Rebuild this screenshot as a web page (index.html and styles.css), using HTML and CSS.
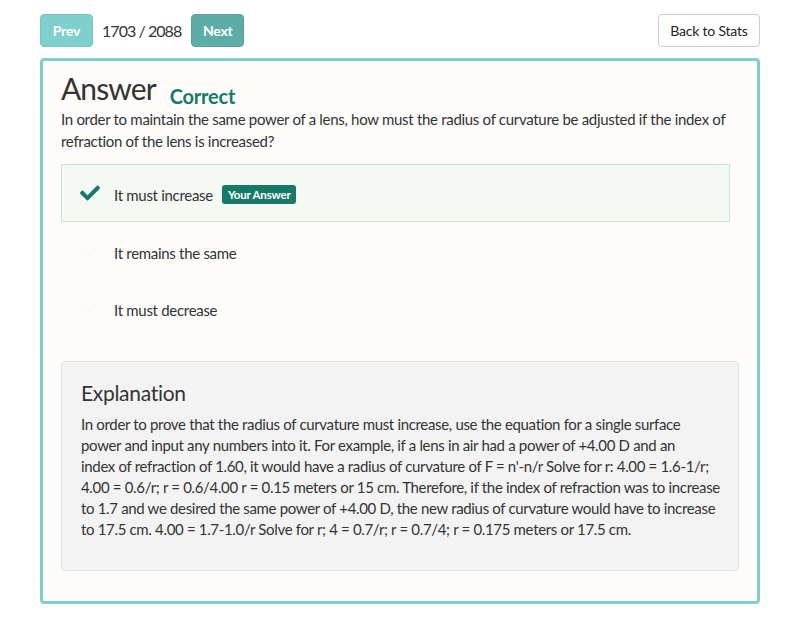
FILE: index.html
```html
<!DOCTYPE html>
<html>
<head>
<meta charset="utf-8">
<link rel="stylesheet" href="styles.css">
</head>
<body>
<div class="page">
  <div class="topbar">
    <div class="nav">
      <button class="btn btn-prev">Prev</button>
      <span class="counter">1703 / 2088</span>
      <button class="btn btn-next">Next</button>
    </div>
    <button class="btn btn-back">Back to Stats</button>
  </div>
  <div class="card">
    <div class="title">
      <h1>Answer</h1>
      <span class="status">Correct</span>
    </div>
    <p class="question">In order to maintain the same power of a lens, how must the radius of curvature be adjusted if the index of refraction of the lens is increased?</p>
    <div class="options">
      <div class="option selected">
        <svg class="check" viewBox="0 0 512 512"><path d="M173.898 439.404l-166.4-166.4c-9.997-9.997-9.997-26.206 0-36.204l36.203-36.204c9.997-9.998 26.207-9.998 36.204 0L192 312.69 432.095 72.596c9.997-9.997 26.207-9.997 36.204 0l36.203 36.204c9.997 9.997 9.997 26.206 0 36.204l-294.4 294.401c-9.998 9.997-26.207 9.997-36.204-.001z"/></svg>
        <span class="opt-text">It must increase</span>
        <span class="badge">Your Answer</span>
      </div>
      <div class="option">
        <svg class="check faint" viewBox="0 0 512 512"><path d="M173.898 439.404l-166.4-166.4c-9.997-9.997-9.997-26.206 0-36.204l36.203-36.204c9.997-9.998 26.207-9.998 36.204 0L192 312.69 432.095 72.596c9.997-9.997 26.207-9.997 36.204 0l36.203 36.204c9.997 9.997 9.997 26.206 0 36.204l-294.4 294.401c-9.998 9.997-26.207 9.997-36.204-.001z"/></svg>
        <span class="opt-text">It remains the same</span>
      </div>
      <div class="option">
        <svg class="check faint" viewBox="0 0 512 512"><path d="M173.898 439.404l-166.4-166.4c-9.997-9.997-9.997-26.206 0-36.204l36.203-36.204c9.997-9.998 26.207-9.998 36.204 0L192 312.69 432.095 72.596c9.997-9.997 26.207-9.997 36.204 0l36.203 36.204c9.997 9.997 9.997 26.206 0 36.204l-294.4 294.401c-9.998 9.997-26.207 9.997-36.204-.001z"/></svg>
        <span class="opt-text">It must decrease</span>
      </div>
    </div>
    <div class="well">
      <h2>Explanation</h2>
      <p>In order to prove that the radius of curvature must increase, use the equation for a single surface<br>power and input any numbers into it. For example, if a lens in air had a power of +4.00 D and an<br>index of refraction of 1.60, it would have a radius of curvature of F = n'-n/r Solve for r: 4.00 = 1.6-1/r;<br>4.00 = 0.6/r; r = 0.6/4.00 r = 0.15 meters or 15 cm. Therefore, if the index of refraction was to increase<br>to 1.7 and we desired the same power of +4.00 D, the new radius of curvature would have to increase<br>to 17.5 cm. 4.00 = 1.7-1.0/r Solve for r; 4 = 0.7/r; r = 0.7/4; r = 0.175 meters or 17.5 cm.</p>
    </div>
  </div>
</div>
</body>
</html>
```
FILE: styles.css
```css
* { box-sizing: border-box; }
html, body { margin: 0; background: #fff; }
body {
  font-family: Lato, "Noto Sans", sans-serif;
  color: #333;
  font-size: 15px;
}
.page { padding: 14px 40px 0 40px; }
.topbar {
  display: flex;
  justify-content: space-between;
  align-items: center;
  height: 33px;
}
.nav { display: flex; align-items: center; }
.btn {
  font-family: inherit;
  height: 33px;
  border-radius: 4px;
  font-size: 14px;
  padding: 0;
  cursor: pointer;
}
.btn-prev, .btn-next {
  width: 53px;
  color: #fff;
  font-weight: 700;
  border: 1px solid transparent;
  letter-spacing: -0.2px;
}
.btn-prev { background: #7fcfcc; border-color: #75c6c3; }
.btn-next { background: #5eaca7; border-color: #57a39e; }
.counter {
  font-size: 16px;
  letter-spacing: -0.95px;
  color: #333;
  margin: 0 10px 0 9px;
}
.btn-back {
  background: #fff;
  border: 1px solid #ccc;
  color: #222;
  width: 102px;
  letter-spacing: -0.2px;
}
.card {
  margin-top: 11px;
  border: 3px solid #7fcfcc;
  border-radius: 4px;
  background: #fdfcfb;
  padding: 9px 18px 30px 18px;
  height: 546px;
}
.title { display: flex; align-items: baseline; }
h1 {
  font-size: 30px;
  font-weight: 400;
  margin: 0;
  color: #333;
  line-height: 36px;
  letter-spacing: -0.9px;
}
.status {
  color: #167a68;
  font-weight: 700;
  font-size: 20px;
  margin-left: 14px;
  position: relative;
  top: 4px;
  letter-spacing: -0.2px;
}
.question {
  margin: 2px 0 0 0;
  line-height: 22px;
  color: #333;
  letter-spacing: -0.3px;
}
.options { margin: 12px 9px 0 0; }
.option {
  display: flex;
  align-items: center;
  height: 58px;
  padding-left: 17px;
  border: 1px solid transparent;
  letter-spacing: -0.3px;
}
.option + .option { height: 57px; padding-top: 5px; }
.option.selected {
  background: #f4f9f3;
  border-color: #cbe6c6;
  padding-top: 3px;
}
.check { width: 22px; height: 20px; fill: #177a68; margin-right: 13px; position: relative; top: -2px; }
.check.faint { fill: #fbfaf8; }
.opt-text { color: #333; font-size: 15px; }
.badge {
  background: #177a68;
  color: #fff;
  font-size: 11.5px;
  font-weight: 700;
  padding: 3px 6px;
  border-radius: 3px;
  margin-left: 9px;
  line-height: 13px;
  letter-spacing: -0.2px;
}
.well {
  margin-top: 25px;
  background: #f3f3f3;
  border: 1px solid #e3e3e3;
  border-radius: 4px;
  padding: 17px 19px 30px 19px;
  height: 210px;
}
h2 {
  font-size: 21px;
  font-weight: 400;
  margin: 0 0 7px 0;
  color: #333;
  line-height: 28px;
  letter-spacing: -0.3px;
}
.well p {
  margin: 0;
  line-height: 21px;
  color: #333;
  font-size: 15px;
  letter-spacing: -0.33px;
  white-space: nowrap;
}
```
